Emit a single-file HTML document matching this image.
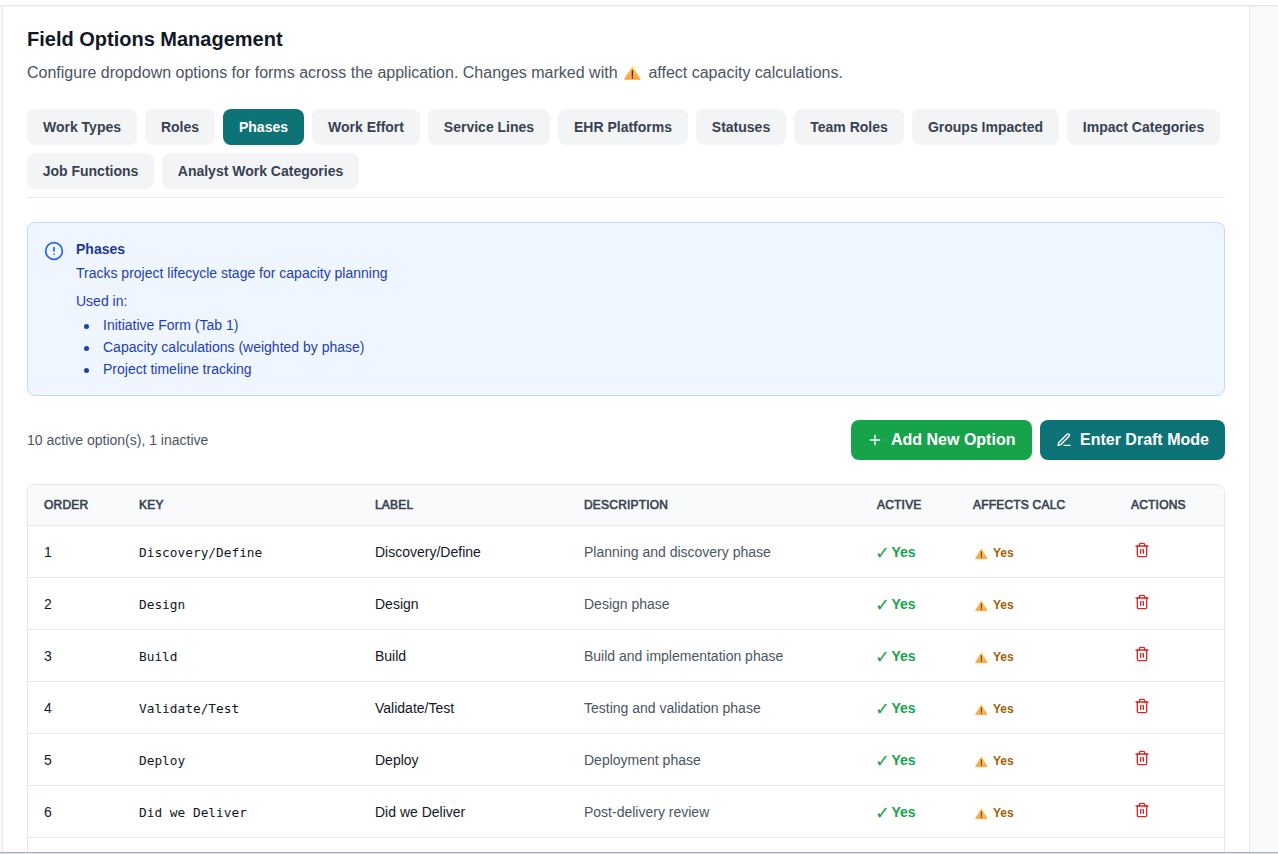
<!DOCTYPE html>
<html lang="en">
<head>
<meta charset="utf-8">
<title>Field Options Management</title>
<style>
*{box-sizing:border-box;margin:0;padding:0}
html,body{width:1278px;height:854px;overflow:hidden}
body{position:relative;background:#f9fafb;font-family:"Liberation Sans",Arial,sans-serif;color:#111827;-webkit-font-smoothing:auto}
.topbar{position:absolute;left:0;top:0;width:1278px;height:6px;background:#fff;border-bottom:1px solid #e5e7eb;box-shadow:0 1px 2px rgba(0,0,0,.04);z-index:5}
.card{position:absolute;left:2px;top:5px;width:1248px;height:900px;background:#fff;border:1px solid #e5e7eb}
.abs{position:absolute}
h2{position:absolute;left:24px;top:19px;font-size:20px;line-height:28px;font-weight:700;color:#111827;white-space:nowrap}
.sub{position:absolute;left:24px;top:55px;font-size:16px;line-height:24px;color:#4b5563;white-space:nowrap}
.tabs{position:absolute;left:24px;top:103px;width:1198px;height:89px;border-bottom:1px solid #e5e7eb;display:flex;flex-wrap:wrap;gap:8px;align-content:flex-start}
.tab{height:36px;padding:8px 0;text-align:center;border-radius:8px;background:#f3f4f6;color:#374151;font-size:14px;line-height:20px;font-weight:700;white-space:nowrap}
.tab.on{background:#0e7377;color:#fff}
.info{position:absolute;left:24px;top:216px;width:1198px;height:174px;background:#eff6ff;border:1px solid #bfdbfe;border-radius:8px}
.info svg{position:absolute;left:16px;top:18px}
.info .t{position:absolute;left:48px;top:16px;font-size:14px;line-height:20px;font-weight:700;color:#1e3a8a}
.info .d{position:absolute;left:48px;top:40px;font-size:14px;line-height:20px;color:#1e40af;white-space:nowrap}
.info .u{position:absolute;left:48px;top:68px;font-size:14px;line-height:20px;color:#1e40af}
.info ul{position:absolute;left:48px;top:92px;list-style:none;font-size:14px;line-height:20px;color:#1e40af}
.info li{position:relative;padding-left:27px;height:20px;margin-bottom:2px;white-space:nowrap}
.info li:before{content:"";position:absolute;left:8px;top:8.5px;width:5px;height:5px;border-radius:50%;background:#1e40af}
.count{position:absolute;left:24px;top:424px;font-size:14px;line-height:20px;color:#4b5563;white-space:nowrap}
.btn{position:absolute;top:414px;height:40px;border-radius:8px;color:#fff;font-size:16px;line-height:24px;font-weight:700;padding:8px 16px;display:flex;align-items:center;gap:8px;white-space:nowrap}
.btn.g{left:848px;width:181px;background:#16a34a}
.btn.t{left:1037px;width:185px;background:#0e7377}
.tbl{position:absolute;left:24px;top:478px;width:1198px;height:500px;border:1px solid #e5e7eb;border-radius:8px;overflow:hidden;background:#fff}
.th{position:absolute;left:0;top:0;width:1196px;height:40px;background:#f9fafb}
.th span{position:absolute;top:12px;font-size:12px;line-height:16px;font-weight:400;-webkit-text-stroke:.6px #374151;letter-spacing:.2px;color:#374151;white-space:nowrap}
.tr{position:absolute;left:0;width:1196px;height:52px;border-top:1px solid #e5e7eb}
.tr>*{position:absolute;top:16px;font-size:14px;line-height:20px;white-space:nowrap}
.c1{left:16px}.c2{left:111px}.c3{left:347px}.c4{left:556px}.c5{left:849px}.c6{left:945px}.c7{left:1103px}
.tr .c2{font-family:"DejaVu Sans Mono","Liberation Mono",monospace;font-size:12.8px;letter-spacing:0;top:17px}
.tr .c4{color:#4b5563}
.tr .c5{color:#16a34a;font-weight:700;padding-left:14.5px}
.tr .c5 i{position:absolute;left:-2px;top:1px;font-style:normal;font-family:"DejaVu Sans",sans-serif;font-weight:700;font-size:18px;line-height:20px}
.tr .c6{color:#a16207;font-weight:700;font-size:12px;top:17px}
.tr .c6 svg{position:absolute;left:2px;top:5px}
.tr .c6 b{margin-left:20px}
.tr .c7{top:16px;left:1106px;height:16px;line-height:0}
.bot1{position:absolute;left:0;top:852px;width:1278px;height:1px;background:#a9b1b6;z-index:9}
.bot2{position:absolute;left:0;top:853px;width:1278px;height:1px;background:#d9e3ea;z-index:9}
</style>
</head>
<body>
<div class="card">
  <h2>Field Options Management</h2>
  <p class="sub">Configure dropdown options for forms across the application. Changes marked with <svg width="18" height="16" viewBox="0 0 18 16" style="vertical-align:-2px;margin:0 2px"><defs><linearGradient id="wg" x1="0" y1="0" x2="0" y2="1"><stop offset="0" stop-color="#ffd250"/><stop offset="1" stop-color="#ffa143"/></linearGradient></defs><path d="M8.4 2.6 16.2 15.2H0.6Z" fill="url(#wg)" stroke="url(#wg)" stroke-width="1" stroke-linejoin="round"/><rect x="7.7" y="5.9" width="1.4" height="6.7" rx=".6" fill="#2f3352"/><circle cx="8.4" cy="13.9" r=".8" fill="#2f3352"/></svg> affect capacity calculations.</p>
  <div class="tabs">
    <div class="tab" style="width:110px">Work Types</div><div class="tab" style="width:70px">Roles</div><div class="tab on" style="width:81px">Phases</div><div class="tab" style="width:108px">Work Effort</div><div class="tab" style="width:122px">Service Lines</div><div class="tab" style="width:130px">EHR Platforms</div><div class="tab" style="width:90px">Statuses</div><div class="tab" style="width:110px">Team Roles</div><div class="tab" style="width:147px">Groups Impacted</div><div class="tab" style="width:153px">Impact Categories</div><div class="tab" style="width:127px">Job Functions</div><div class="tab" style="width:197px">Analyst Work Categories</div>
  </div>
  <div class="info">
    <svg width="20" height="20" viewBox="0 0 24 24" fill="none" stroke="#2563eb" stroke-width="2" stroke-linecap="round" stroke-linejoin="round"><circle cx="12" cy="12" r="10"/><line x1="12" y1="8" x2="12" y2="12"/><line x1="12" y1="16" x2="12.01" y2="16"/></svg>
    <div class="t">Phases</div>
    <div class="d">Tracks project lifecycle stage for capacity planning</div>
    <div class="u">Used in:</div>
    <ul><li>Initiative Form (Tab 1)</li><li>Capacity calculations (weighted by phase)</li><li>Project timeline tracking</li></ul>
  </div>
  <div class="count">10 active option(s), 1 inactive</div>
  <div class="btn g"><svg width="16" height="16" viewBox="0 0 24 24" fill="none" stroke="#fff" stroke-width="2" stroke-linecap="round" stroke-linejoin="round"><path d="M5 12h14"/><path d="M12 5v14"/></svg><span>Add New Option</span></div>
  <div class="btn t"><svg width="16" height="16" viewBox="0 0 24 24" fill="none" stroke="#fff" stroke-width="2" stroke-linecap="round" stroke-linejoin="round"><path d="M12 20h9"/><path d="M16.5 3.5a2.121 2.121 0 0 1 3 3L7 19l-4 1 1-4L16.5 3.5z"/></svg><span>Enter Draft Mode</span></div>
  <div class="tbl">
    <div class="th"><span class="c1">ORDER</span><span class="c2">KEY</span><span class="c3">LABEL</span><span class="c4">DESCRIPTION</span><span class="c5">ACTIVE</span><span class="c6">AFFECTS CALC</span><span class="c7">ACTIONS</span></div>
    <div class="tr" style="top:40px"><span class="c1">1</span><span class="c2">Discovery/Define</span><span class="c3">Discovery/Define</span><span class="c4">Planning and discovery phase</span><span class="c5"><i>✓</i>Yes</span><span class="c6"><svg width="14" height="12" viewBox="0 0 14 12"><path d="M6.3 .6 12.1 10.6H.5Z" fill="url(#wg)" stroke="url(#wg)" stroke-width=".8" stroke-linejoin="round"/><rect x="5.8" y="3" width="1" height="5.5" rx=".4" fill="#35385a"/><circle cx="6.3" cy="9.4" r=".55" fill="#35385a"/></svg><b>Yes</b></span><span class="c7"><svg width="16" height="16" viewBox="0 0 24 24" fill="none" stroke="#dc2626" stroke-width="2" stroke-linecap="round" stroke-linejoin="round"><path d="M3 6h18"/><path d="M19 6v14c0 1-1 2-2 2H7c-1 0-2-1-2-2V6"/><path d="M8 6V4c0-1 1-2 2-2h4c1 0 2 1 2 2v2"/><line x1="10" x2="10" y1="11" y2="17"/><line x1="14" x2="14" y1="11" y2="17"/></svg></span></div>
    <div class="tr" style="top:92px"><span class="c1">2</span><span class="c2">Design</span><span class="c3">Design</span><span class="c4">Design phase</span><span class="c5"><i>✓</i>Yes</span><span class="c6"><svg width="14" height="12" viewBox="0 0 14 12"><path d="M6.3 .6 12.1 10.6H.5Z" fill="url(#wg)" stroke="url(#wg)" stroke-width=".8" stroke-linejoin="round"/><rect x="5.8" y="3" width="1" height="5.5" rx=".4" fill="#35385a"/><circle cx="6.3" cy="9.4" r=".55" fill="#35385a"/></svg><b>Yes</b></span><span class="c7"><svg width="16" height="16" viewBox="0 0 24 24" fill="none" stroke="#dc2626" stroke-width="2" stroke-linecap="round" stroke-linejoin="round"><path d="M3 6h18"/><path d="M19 6v14c0 1-1 2-2 2H7c-1 0-2-1-2-2V6"/><path d="M8 6V4c0-1 1-2 2-2h4c1 0 2 1 2 2v2"/><line x1="10" x2="10" y1="11" y2="17"/><line x1="14" x2="14" y1="11" y2="17"/></svg></span></div>
    <div class="tr" style="top:144px"><span class="c1">3</span><span class="c2">Build</span><span class="c3">Build</span><span class="c4">Build and implementation phase</span><span class="c5"><i>✓</i>Yes</span><span class="c6"><svg width="14" height="12" viewBox="0 0 14 12"><path d="M6.3 .6 12.1 10.6H.5Z" fill="url(#wg)" stroke="url(#wg)" stroke-width=".8" stroke-linejoin="round"/><rect x="5.8" y="3" width="1" height="5.5" rx=".4" fill="#35385a"/><circle cx="6.3" cy="9.4" r=".55" fill="#35385a"/></svg><b>Yes</b></span><span class="c7"><svg width="16" height="16" viewBox="0 0 24 24" fill="none" stroke="#dc2626" stroke-width="2" stroke-linecap="round" stroke-linejoin="round"><path d="M3 6h18"/><path d="M19 6v14c0 1-1 2-2 2H7c-1 0-2-1-2-2V6"/><path d="M8 6V4c0-1 1-2 2-2h4c1 0 2 1 2 2v2"/><line x1="10" x2="10" y1="11" y2="17"/><line x1="14" x2="14" y1="11" y2="17"/></svg></span></div>
    <div class="tr" style="top:196px"><span class="c1">4</span><span class="c2">Validate/Test</span><span class="c3">Validate/Test</span><span class="c4">Testing and validation phase</span><span class="c5"><i>✓</i>Yes</span><span class="c6"><svg width="14" height="12" viewBox="0 0 14 12"><path d="M6.3 .6 12.1 10.6H.5Z" fill="url(#wg)" stroke="url(#wg)" stroke-width=".8" stroke-linejoin="round"/><rect x="5.8" y="3" width="1" height="5.5" rx=".4" fill="#35385a"/><circle cx="6.3" cy="9.4" r=".55" fill="#35385a"/></svg><b>Yes</b></span><span class="c7"><svg width="16" height="16" viewBox="0 0 24 24" fill="none" stroke="#dc2626" stroke-width="2" stroke-linecap="round" stroke-linejoin="round"><path d="M3 6h18"/><path d="M19 6v14c0 1-1 2-2 2H7c-1 0-2-1-2-2V6"/><path d="M8 6V4c0-1 1-2 2-2h4c1 0 2 1 2 2v2"/><line x1="10" x2="10" y1="11" y2="17"/><line x1="14" x2="14" y1="11" y2="17"/></svg></span></div>
    <div class="tr" style="top:248px"><span class="c1">5</span><span class="c2">Deploy</span><span class="c3">Deploy</span><span class="c4">Deployment phase</span><span class="c5"><i>✓</i>Yes</span><span class="c6"><svg width="14" height="12" viewBox="0 0 14 12"><path d="M6.3 .6 12.1 10.6H.5Z" fill="url(#wg)" stroke="url(#wg)" stroke-width=".8" stroke-linejoin="round"/><rect x="5.8" y="3" width="1" height="5.5" rx=".4" fill="#35385a"/><circle cx="6.3" cy="9.4" r=".55" fill="#35385a"/></svg><b>Yes</b></span><span class="c7"><svg width="16" height="16" viewBox="0 0 24 24" fill="none" stroke="#dc2626" stroke-width="2" stroke-linecap="round" stroke-linejoin="round"><path d="M3 6h18"/><path d="M19 6v14c0 1-1 2-2 2H7c-1 0-2-1-2-2V6"/><path d="M8 6V4c0-1 1-2 2-2h4c1 0 2 1 2 2v2"/><line x1="10" x2="10" y1="11" y2="17"/><line x1="14" x2="14" y1="11" y2="17"/></svg></span></div>
    <div class="tr" style="top:300px"><span class="c1">6</span><span class="c2">Did we Deliver</span><span class="c3">Did we Deliver</span><span class="c4">Post-delivery review</span><span class="c5"><i>✓</i>Yes</span><span class="c6"><svg width="14" height="12" viewBox="0 0 14 12"><path d="M6.3 .6 12.1 10.6H.5Z" fill="url(#wg)" stroke="url(#wg)" stroke-width=".8" stroke-linejoin="round"/><rect x="5.8" y="3" width="1" height="5.5" rx=".4" fill="#35385a"/><circle cx="6.3" cy="9.4" r=".55" fill="#35385a"/></svg><b>Yes</b></span><span class="c7"><svg width="16" height="16" viewBox="0 0 24 24" fill="none" stroke="#dc2626" stroke-width="2" stroke-linecap="round" stroke-linejoin="round"><path d="M3 6h18"/><path d="M19 6v14c0 1-1 2-2 2H7c-1 0-2-1-2-2V6"/><path d="M8 6V4c0-1 1-2 2-2h4c1 0 2 1 2 2v2"/><line x1="10" x2="10" y1="11" y2="17"/><line x1="14" x2="14" y1="11" y2="17"/></svg></span></div>
    <div class="tr" style="top:352px"></div>
  </div>
</div>
<div class="topbar"></div>
<div class="bot1"></div><div class="bot2"></div>
</body>
</html>
